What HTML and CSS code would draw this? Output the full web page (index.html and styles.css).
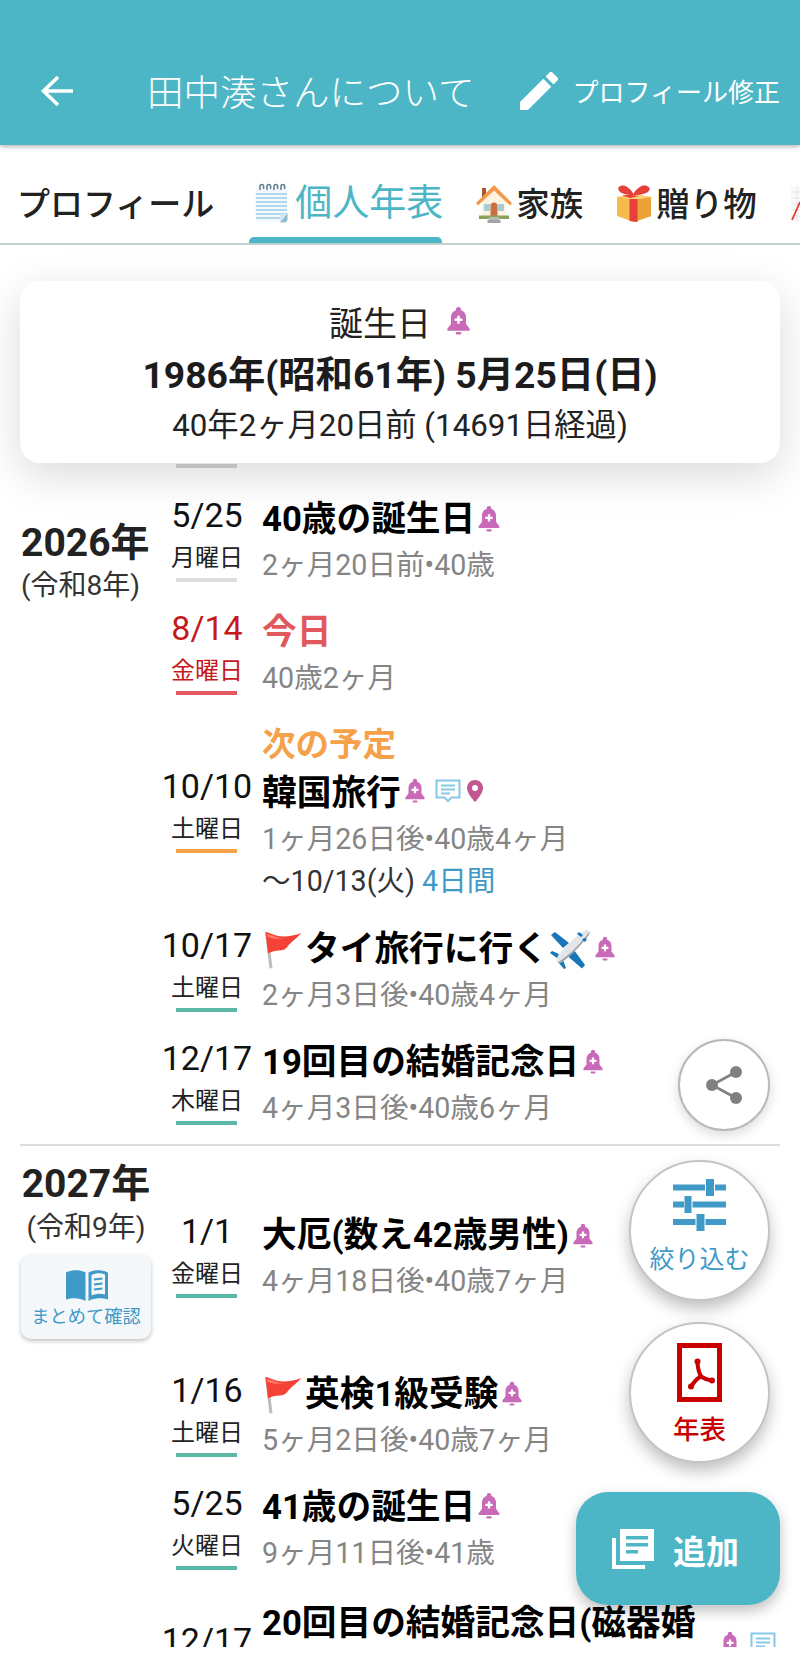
FILE: index.html
```html
<!DOCTYPE html>
<html lang="ja">
<head>
<meta charset="utf-8">
<title>田中湊さんについて</title>
<link rel="stylesheet" href="styles.css">
</head>
<body>
<svg class="defs" width="0" height="0" aria-hidden="true">
  <symbol id="bell" viewBox="0 0 24 30">
    <path fill="#c96ab8" d="M12 1a2.600 2.600 0 0 1 2.600 2.600v.9C18.400 5.700 19.800 8.800 19.800 12v6.500L23.500 23.500V25.500H.5V23.500L4.200 18.500V12c0-3.200 1.400-6.300 5.200-7.500v-.9A2.600 2.600 0 0 1 12 1z"/>
    <rect fill="#c96ab8" x="9" y="27" width="6" height="2.500" rx="1.200"/>
    <path fill="#fff" d="M10.700 10.200h2.600v2.800h2.800v2.600h-2.800v2.800h-2.600v-2.800H7.900v-2.600h2.800z"/>
  </symbol>
  <symbol id="chat" viewBox="0 0 26 24">
    <path fill="none" stroke="#86c8e8" stroke-width="2" d="M1.500 1.500h23v17h-8l-3.500 3.500-3.500-3.500h-8z"/>
    <path fill="none" stroke="#86c8e8" stroke-width="1.800" d="M6 6.500h14M6 10.500h14M6 14.500h9"/>
  </symbol>
  <symbol id="pin" viewBox="0 0 16 22">
    <path fill="#c2568e" d="M8 0C3.600 0 0 3.500 0 7.900 0 13.500 8 22 8 22s8-8.500 8-14.100C16 3.500 12.400 0 8 0z"/>
    <circle cx="8" cy="8" r="3" fill="#fff"/>
  </symbol>
  <symbol id="flag" viewBox="0 0 40 40">
    <path fill="#bdbdbd" d="M2 3.500l3-.6L9.500 39l-3 .5z"/>
    <path fill="#f44336" d="M2.500 3c6 1.500 11 4.500 18 4.500 6 0 12-1.500 18-3.500C33 10 28 13 25 17c-2 3-5 4.500-9 4.500-3.500 0-7.500 1-11 3z"/>
    <path fill="#ff7a6b" d="M4 5c6 1.500 10 4 16 4.200-6 1.200-10 .5-15.500-1.200z"/>
  </symbol>
  <symbol id="plane" viewBox="0 0 40 40">
    <path fill="#1976b8" d="M19 14L5 3 1 6 13 19zM24 21l11 15-3 3.500-14-12zM9 25l-7-3-2 2 7 5zM13 31l3 8-2 1-6-7z"/>
    <path fill="#e3e6e8" d="M38 1c2 1 2 3 .500 5.500C33 14 22 26 12 33c-2 1.200-4 1.500-5 .5s-.5-3 .8-5C14 18 26 7 33 2.500 35 1 37 .5 38 1z"/>
    <path fill="#9aa4aa" d="M7.500 33.500c1 .5 3 .3 4.500-.5C22 26 33 14 38.500 6.500 39.500 5 39.800 3.500 39.500 2.500 33 12 20 26 7.500 33.500z"/>
    <path fill="#1976b8" d="M29 3l4 3-2 2-4-3zM37 10l-3-1-2 2 3 2z"/>
  </symbol>
</svg>

<div class="app">
  <header class="topbar">
    <svg class="back-icon" viewBox="0 0 34 32"><path fill="none" stroke="#fff" stroke-width="3.600" d="M33 16H4M18 2L3.500 16 18 30"/></svg>
    <h1 class="topbar-title">田中湊さんについて</h1>
    <div class="edit-link">
      <svg class="edit-icon" viewBox="3 3 18 18"><path fill="#fff" d="M3 17.250V21h3.750L17.810 9.940l-3.750-3.750L3 17.250zM20.710 7.040a1 1 0 0 0 0-1.410l-2.340-2.340a1 1 0 0 0-1.410 0l-1.830 1.830 3.750 3.750 1.830-1.830z"/></svg>
      <span class="edit-text">プロフィール修正</span>
    </div>
  </header>

  <nav class="tabs">
    <div class="tab tab-plain">プロフィール</div>
    <div class="tab tab-active">
      <svg class="tab-emoji-note" viewBox="0 0 33 40">
        <rect x="0.500" y="3" width="32" height="36.500" rx="2" fill="#f1f9fd"/>
        <path stroke="#9ccce6" stroke-width="1.700" d="M1 11h31M1 15h31M1 19h31M1 23h31M1 27h31M1 31h31M1 35h24"/>
        <path fill="none" stroke="#5f7c8a" stroke-width="1.500" d="M5 7V3.200a1.800 1.800 0 0 1 3.600 0V6M12 7V3.200a1.800 1.800 0 0 1 3.600 0V6M19 7V3.200a1.800 1.800 0 0 1 3.600 0V6M26 7V3.200a1.800 1.800 0 0 1 3.600 0V6"/>
        <path fill="#8fbdd2" d="M32.500 30 25 39.500h4c2 0 3.500-1.500 3.500-3.500z"/>
        <path fill="#d5e8f0" d="M32.500 30c-2.500 1-6 1.500-8 1 .5 3 .5 6 .5 8.500z"/>
      </svg>
      <span class="tab-active-text">個人年表</span>
    </div>
    <div class="tab">
      <svg class="tab-emoji" viewBox="0 0 36 40">
        <rect x="6" y="4" width="4" height="9" fill="#a5573a"/>
        <path fill="#fdf3df" d="M6 17 18 6l12 11v17H6z"/>
        <path fill="#f2994a" d="M18 1 36 19l-2 2.500L18 6.500 2 21.500 0 19z"/>
        <rect x="8" y="20" width="6" height="7" fill="#a8cbd8"/>
        <rect x="22" y="20" width="6" height="7" fill="#a8cbd8"/>
        <path fill="#c8703f" d="M14.500 33V22a3.500 3.500 0 0 1 7 0v11z"/>
        <rect x="3" y="31.500" width="30" height="3.500" fill="#8aa35a"/>
        <rect x="13" y="33" width="10" height="3" fill="#b9b9b9"/>
        <rect x="11.500" y="36" width="13" height="3" fill="#a3a3a3"/>
      </svg>
      <span class="tab-text">家族</span>
    </div>
    <div class="tab tab-gift">
      <svg class="tab-emoji" viewBox="0 0 36 38">
        <path fill="#f7bb4b" d="M1 12 18 9l17 3v19l-17 6-17-6z"/>
        <path fill="#eaa334" d="M18 14.500 35 12v19l-17 6z"/>
        <path fill="#f9cf73" d="M1 12 18 9l17 3-17 3z"/>
        <path fill="#e5403a" d="M13.500 14v22l8 1V14zM6 10.500l8-1 8 2-8 1.500z"/>
        <path fill="#e5403a" d="M17 10C12 10 4 9 2.500 5 1 1 7-.5 10.500 1.500 14 4 16 6 17.500 9c1-3 4-6 8-8 3.500-1.500 9.500.5 8 4C32 9 23 10 18.500 10.500z"/>
      </svg>
      <span class="tab-text">贈り物</span>
    </div>
    <div class="tab">
      <svg class="tab-emoji" viewBox="0 0 36 40">
        <rect x="0" y="2" width="36" height="36" fill="#fafafa"/>
        <path stroke="#e2e6e8" stroke-width="1" d="M0 8h36M0 14h36M0 20h36M0 26h36M0 32h36M6 2v36M12 2v36"/>
        <path fill="none" stroke="#e53935" stroke-width="1.800" d="M1 36 9 18"/>
      </svg>
    </div>
  </nav>

  <main class="timeline">
    <section class="year-section">
      <div class="year-col year-col-first">
        <div class="year-name">2026年</div>
        <div class="year-era">(令和8年)</div>
      </div>
      <div class="rows rows-first">
        <div class="peek-line"></div>

        <div class="row">
          <div class="date-col">
            <div class="date-num">5/25</div>
            <div class="date-week">月曜日</div>
            <div class="date-bar bar-past"></div>
          </div>
          <div class="content-col">
            <div class="title-line"><span class="title-text">40歳の誕生日</span><svg class="ic-bell"><use href="#bell"/></svg></div>
            <div class="sub-line">2ヶ月20日前•40歳</div>
          </div>
        </div>

        <div class="row">
          <div class="date-col date-today">
            <div class="date-num">8/14</div>
            <div class="date-week">金曜日</div>
            <div class="date-bar bar-today"></div>
          </div>
          <div class="content-col">
            <div class="title-line"><span class="title-text title-today">今日</span></div>
            <div class="sub-line">40歳2ヶ月</div>
          </div>
        </div>

        <div class="row">
          <div class="date-col">
            <div class="date-num">10/10</div>
            <div class="date-week">土曜日</div>
            <div class="date-bar bar-next"></div>
          </div>
          <div class="content-col">
            <div class="next-label">次の予定</div>
            <div class="title-line title-after-label"><span class="title-text">韓国旅行</span><svg class="ic-bell ic-bell-short"><use href="#bell"/></svg><svg class="ic-chat"><use href="#chat"/></svg><svg class="ic-pin"><use href="#pin"/></svg></div>
            <div class="sub-line">1ヶ月26日後•40歳4ヶ月</div>
            <div class="range-line">〜10/13(火) <span class="range-days">4日間</span></div>
          </div>
        </div>

        <div class="row">
          <div class="date-col">
            <div class="date-num">10/17</div>
            <div class="date-week">土曜日</div>
            <div class="date-bar bar-future"></div>
          </div>
          <div class="content-col">
            <div class="title-line"><svg class="ic-flag"><use href="#flag"/></svg><span class="title-text">タイ旅行に行く</span><svg class="ic-plane"><use href="#plane"/></svg><svg class="ic-bell ic-bell-short"><use href="#bell"/></svg></div>
            <div class="sub-line">2ヶ月3日後•40歳4ヶ月</div>
          </div>
        </div>

        <div class="row row-end">
          <div class="date-col">
            <div class="date-num">12/17</div>
            <div class="date-week">木曜日</div>
            <div class="date-bar bar-future"></div>
          </div>
          <div class="content-col">
            <div class="title-line"><span class="title-text">19回目の結婚記念日</span><svg class="ic-bell ic-bell-short"><use href="#bell"/></svg></div>
            <div class="sub-line">4ヶ月3日後•40歳6ヶ月</div>
          </div>
        </div>
      </div>
    </section>

    <div class="year-divider"></div>

    <section class="year-section">
      <div class="year-col">
        <div class="year-name">2027年</div>
        <div class="year-era">(令和9年)</div>
        <div class="summary-btn">
          <svg class="book-icon" viewBox="0 0 42 31">
            <path fill="#3f9ac8" d="M0 2.500C6-.5 14-.5 19.500 2.500V31C14 27.500 6 27.500 0 29.500z"/>
            <path fill="#3f9ac8" d="M22.500 2.500C28-.5 36-.5 42 2.500V29.500C36 27.500 28 27.500 22.500 31zM25.500 5v20.500c4.500-2 9.500-2.200 13.500-1V4.500C34.500 2.500 29.500 2.800 25.500 5z"/>
            <path stroke="#3f9ac8" stroke-width="2.200" d="M28 9.500l8.500-1M28 14.500l8.500-1M28 19.500l8.500-1"/>
          </svg>
          <span class="summary-text">まとめて確認</span>
        </div>
      </div>
      <div class="rows rows-second">
        <div class="row row-lead">
          <div class="date-col">
            <div class="date-num">1/1</div>
            <div class="date-week">金曜日</div>
            <div class="date-bar bar-future"></div>
          </div>
          <div class="content-col">
            <div class="title-line"><span class="title-text">大厄(数え42歳男性)</span><svg class="ic-bell ic-bell-short"><use href="#bell"/></svg></div>
            <div class="sub-line">4ヶ月18日後•40歳7ヶ月</div>
          </div>
        </div>

        <div class="row">
          <div class="date-col">
            <div class="date-num">1/16</div>
            <div class="date-week">土曜日</div>
            <div class="date-bar bar-future"></div>
          </div>
          <div class="content-col">
            <div class="title-line"><svg class="ic-flag"><use href="#flag"/></svg><span class="title-text">英検1級受験</span><svg class="ic-bell ic-bell-short"><use href="#bell"/></svg></div>
            <div class="sub-line">5ヶ月2日後•40歳7ヶ月</div>
          </div>
        </div>

        <div class="row">
          <div class="date-col">
            <div class="date-num">5/25</div>
            <div class="date-week">火曜日</div>
            <div class="date-bar bar-future"></div>
          </div>
          <div class="content-col">
            <div class="title-line"><span class="title-text">41歳の誕生日</span><svg class="ic-bell"><use href="#bell"/></svg></div>
            <div class="sub-line">9ヶ月11日後•41歳</div>
          </div>
        </div>

        <div class="row row-long">
          <div class="date-col">
            <div class="date-num">12/17</div>
          </div>
          <div class="content-col">
            <div class="title-line title-line-long"><span class="title-text title-wrap">20回目の結婚記念日(磁器婚</span><svg class="ic-bell ic-bell-short"><use href="#bell"/></svg><svg class="ic-chat"><use href="#chat"/></svg></div>
          </div>
        </div>
      </div>
    </section>

    <div class="birth-card">
      <div class="birth-head"><span>誕生日</span><svg class="ic-bell-large"><use href="#bell"/></svg></div>
      <div class="birth-date">1986年(昭和61年) 5月25日(日)</div>
      <div class="birth-since">40年2ヶ月20日前 (14691日経過)</div>
    </div>
  </main>

  <button class="fab-round fab-share" type="button">
    <svg class="share-icon" viewBox="0 0 38 38">
      <path fill="none" stroke="#808080" stroke-width="2.600" d="M31 6 7 19l24 13"/>
      <circle cx="31" cy="6" r="6" fill="#808080"/>
      <circle cx="7" cy="19" r="6" fill="#808080"/>
      <circle cx="31" cy="32" r="6" fill="#808080"/>
    </svg>
  </button>

  <button class="fab-round fab-large fab-filter" type="button">
    <svg class="tune-icon" viewBox="0 0 53 52">
      <path fill="#3f9ac8" d="M0 5.500h32v6H0zM33 0h8v17h-8zM42 5.500h11v6H42zM0 22.500h11v6H0zM11.500 17h7v17h-7zM19.500 22.500H53v6H19.500zM0 40h22.500v6H0zM23.500 35h8v17h-8zM32.500 40H53v6H32.500z"/>
    </svg>
    <span class="fab-label label-blue">絞り込む</span>
  </button>

  <button class="fab-round fab-large fab-pdf" type="button">
    <svg class="pdf-icon" viewBox="0 0 45 59">
      <rect x="2.500" y="2.500" width="40" height="54" fill="none" stroke="#c80000" stroke-width="5"/>
      <path fill="none" stroke="#c80000" stroke-width="4" stroke-linecap="round" d="M20.500 18.500c0 6 1.500 11 3.500 15M24 33.500c-3.500 1-6.500 5-10 10M24 33.500c3 2 6.500 3.500 10.500 4"/>
      <circle cx="14" cy="43.500" r="3" fill="#c80000"/>
      <circle cx="35" cy="37.500" r="3" fill="#c80000"/>
      <circle cx="20.500" cy="18.500" r="3" fill="#c80000"/>
    </svg>
    <span class="fab-label label-red">年表</span>
  </button>

  <button class="fab-add" type="button">
    <svg class="add-icon" viewBox="0 0 42 40">
      <path fill="#fff" d="M8 0h34v32H8z"/>
      <path fill="#4db6c6" d="M14 7h22v3.500H14zM14 14h22v3.500H14zM14 21h12v3.500H14z"/>
      <path fill="#fff" d="M0 9h4v27h29v4H0z"/>
    </svg>
    <span class="add-text">追加</span>
  </button>
</div>
</body>
</html>
```

FILE: styles.css
```css
* { box-sizing: border-box; }

html, body {
  margin: 0;
  padding: 0;
  background: #fff;
}

body {
  font-family: Roboto, "Noto Sans CJK JP", sans-serif;
  color: #111;
}

.defs { position: absolute; }

.app {
  position: relative;
  width: 800px;
  height: 1655px;
  overflow: hidden;
  background: #fff;
}

/* top bar */
.topbar {
  position: relative;
  z-index: 3;
  display: flex;
  align-items: center;
  height: 145px;
  padding: 36px 20px 0 40px;
  background: #4db6c6;
  box-shadow: 0 2px 4px rgba(0, 0, 0, .28);
  color: #fff;
}

.back-icon { width: 34px; height: 32px; flex: none; margin-top: 1px; }

.topbar-title {
  margin: 0 0 0 73px;
  font-size: 36.500px;
  font-weight: 300;
  white-space: nowrap;
}

.edit-link {
  display: flex;
  align-items: center;
  margin-left: auto;
}

.edit-icon { width: 38px; height: 38px; margin-right: 15px; }

.edit-text { font-size: 26px; white-space: nowrap; }

/* tabs */
.tabs {
  display: flex;
  gap: 34px;
  height: 100px;
  padding: 20px 0 0 17px;
  border-bottom: 2px solid #c3d0d0;
  overflow: hidden;
  white-space: nowrap;
}

.tab {
  display: flex;
  flex: none;
  align-items: center;
  height: 78px;
  font-size: 33.500px;
  font-weight: 500;
  color: #222;
}

.tab-plain { padding-bottom: 5px; font-size: 33px; }

.tab-text { margin: 0 0 5px -1px; }

.tab-active {
  position: relative;
  width: 193px;
  margin-left: 1px;
  padding-left: 6px;
  font-size: 37px;
  font-weight: 400;
  color: #4db6c6;
}

.tab-active::after {
  content: "";
  position: absolute;
  left: 0;
  right: 0;
  bottom: 0;
  height: 6px;
  border-radius: 5px 5px 0 0;
  background: #4db6c6;
}

.tab-active-text { margin: -4px 0 4px 7px; }

.tab-emoji-note { width: 33px; height: 40px; margin-top: -2px; flex: none; }

.tab-emoji { width: 36px; height: 40px; margin-right: 5px; flex: none; }

.tab-gift { margin-left: -1px; }

/* timeline */
.timeline {
  position: relative;
  height: 1402px;
  overflow: hidden;
}

.year-section { display: flex; }

.year-col {
  flex: none;
  width: 132px;
  margin: 0 -2px 0 20px;
  padding-top: 13.500px;
  text-align: center;
}

.year-col-first {
  padding-top: 272.500px;
  padding-left: 1px;
  text-align: left;
}

.year-name {
  font-size: 39px;
  font-weight: 700;
  line-height: 50px;
  color: #222;
  white-space: nowrap;
}

.year-era {
  margin-top: 1.500px;
  font-size: 28px;
  line-height: 34px;
  color: #333;
  white-space: nowrap;
}

.summary-btn {
  display: flex;
  flex-direction: column;
  align-items: center;
  width: 130px;
  height: 84px;
  margin: 10.500px 0 0 1px;
  padding-top: 15px;
  border-radius: 10px;
  background: #f4f8fa;
  box-shadow: 0 2px 4px rgba(0, 0, 0, .25);
}

.book-icon { width: 42px; height: 31px; flex: none; margin-left: 2px; }

.summary-text {
  margin-top: 3px;
  font-size: 18.300px;
  line-height: 26px;
  color: #3f9ac8;
  white-space: nowrap;
}

.rows { flex: 1; min-width: 0; }

.rows-first { padding-top: 219px; }

.rows-second { padding-top: 65.500px; }

.peek-line {
  width: 61px;
  height: 4px;
  margin: 0 0 27px 26px;
  background: #d4d4d4;
}

.row {
  display: flex;
  align-items: center;
  padding-bottom: 26px;
}

.row-end { padding-bottom: 19px; }

.row-lead { margin-bottom: 45.500px; }

.row-long { margin-top: 6px; align-items: flex-start; padding-top: 18px; }

.row-long .content-col { margin-top: -18px; }

.date-col {
  display: flex;
  flex: none;
  flex-direction: column;
  align-items: center;
  width: 112px;
  height: 87px;
}

.date-num {
  margin-left: 2px;
  font-size: 34px;
  line-height: 40px;
  color: #111;
  white-space: nowrap;
}

.date-week {
  margin: 8px 0 0 2px;
  font-size: 24px;
  line-height: 30px;
  color: #222;
  white-space: nowrap;
}

.date-today .date-num,
.date-today .date-week { color: #c41a1a; }

.date-bar {
  width: 61px;
  height: 4px;
  margin-top: 5px;
}

.bar-past { background: #ddd; }
.bar-today { background: #e05a5f; }
.bar-next { background: #f4a14a; }
.bar-future { background: #5cb8a6; }

.content-col {
  flex: 1;
  min-width: 0;
  margin: 2px 0 -2px;
  padding-right: 20px;
}

.title-line {
  display: flex;
  align-items: center;
  min-height: 42px;
}

.title-line-long { min-height: 84px; }

.title-line-long .ic-bell { margin-left: 23px; }

.title-after-label { margin-top: 5.500px; }

.title-after-label svg { margin-top: -4px; }

.title-text {
  font-size: 34.700px;
  font-weight: 700;
  line-height: 42px;
  color: #000;
  white-space: nowrap;
}

.title-today { color: #e0575c; }

.title-wrap { flex: 0 1 auto; align-self: flex-start; min-width: 0; }

.next-label {
  margin-top: 1px;
  font-size: 33.500px;
  font-weight: 700;
  line-height: 42px;
  color: #f4a14a;
}

.sub-line {
  margin-top: 7px;
  font-size: 28.600px;
  line-height: 36px;
  color: #858585;
  white-space: nowrap;
}

.range-line {
  margin: 6px 0 2px;
  font-size: 28.600px;
  line-height: 36px;
  color: #333;
  white-space: nowrap;
}

.range-days { color: #3f9ac8; }

.ic-bell { flex: none; width: 22px; height: 27px; margin: -2px 0 0 3px; }

.ic-bell-short { height: 25px; margin: 0 0 0 3px; }

.ic-chat { flex: none; width: 26px; height: 24px; margin-left: 9px; }

.ic-pin { flex: none; width: 16px; height: 22px; margin-left: 6px; }

.ic-flag { flex: none; width: 40px; height: 40px; margin: 0 2px 0 1px; }

.ic-plane { flex: none; width: 40px; height: 40px; margin-left: 2px; }

.ic-plane + .ic-bell { margin-left: 4px; }

/* divider */
.year-divider {
  height: 2px;
  margin: 0 20px;
  background: #ddd;
}

/* birthday card */
.birth-card {
  position: absolute;
  top: 36px;
  left: 20px;
  width: 760px;
  height: 182px;
  padding-top: 16px;
  border-radius: 20px;
  background: #fff;
  box-shadow: 0 12px 44px rgba(0, 0, 0, .15);
  text-align: center;
}

.birth-head {
  display: flex;
  align-items: center;
  justify-content: center;
  height: 48px;
  font-size: 34px;
  color: #222;
}

.ic-bell-large { width: 25px; height: 29px; margin: -2px 0 0 15px; }

.birth-date {
  margin-top: 4px;
  font-size: 37.300px;
  font-weight: 700;
  line-height: 52px;
  color: #1c1c1c;
  white-space: nowrap;
}

.birth-since {
  font-size: 31.300px;
  line-height: 50px;
  color: #222;
  white-space: nowrap;
}

/* floating buttons */
.fab-round {
  position: absolute;
  z-index: 2;
  display: flex;
  flex-direction: column;
  align-items: center;
  padding: 0;
  border: 2px solid #c4c4c4;
  border-radius: 50%;
  background: #fff;
  font-family: inherit;
}

.fab-share {
  left: 678px;
  top: 1039px;
  width: 92px;
  height: 92px;
  justify-content: center;
  border-color: #b8b8b8;
  box-shadow: 0 4px 12px rgba(0, 0, 0, .15);
}

.share-icon { width: 38px; height: 38px; }

.fab-large {
  left: 629px;
  width: 141px;
  height: 141px;
  box-shadow: 0 8px 16px rgba(0, 0, 0, .25);
}

.fab-filter { top: 1160px; padding-top: 17px; }

.fab-pdf { top: 1322px; padding-top: 19px; }

.tune-icon { width: 53px; height: 52px; flex: none; }

.pdf-icon { width: 45px; height: 59px; flex: none; }

.fab-label { white-space: nowrap; line-height: 34px; }

.label-blue { margin-top: 12px; font-size: 25px; color: #3f9ac8; }

.label-red { margin-top: 11px; font-size: 26.500px; font-weight: 500; color: #c80000; }

.fab-add {
  position: absolute;
  z-index: 2;
  left: 576px;
  top: 1492px;
  display: flex;
  align-items: center;
  width: 204px;
  height: 113px;
  padding: 0 0 0 36px;
  border: 0;
  border-radius: 32px;
  background: #4db6c6;
  box-shadow: 0 6px 14px rgba(0, 0, 0, .25);
  color: #fff;
  font-family: inherit;
}

.add-icon { width: 42px; height: 40px; flex: none; }

.add-text {
  margin: 2px 0 0 19px;
  font-size: 33px;
  font-weight: 700;
  white-space: nowrap;
}
```
